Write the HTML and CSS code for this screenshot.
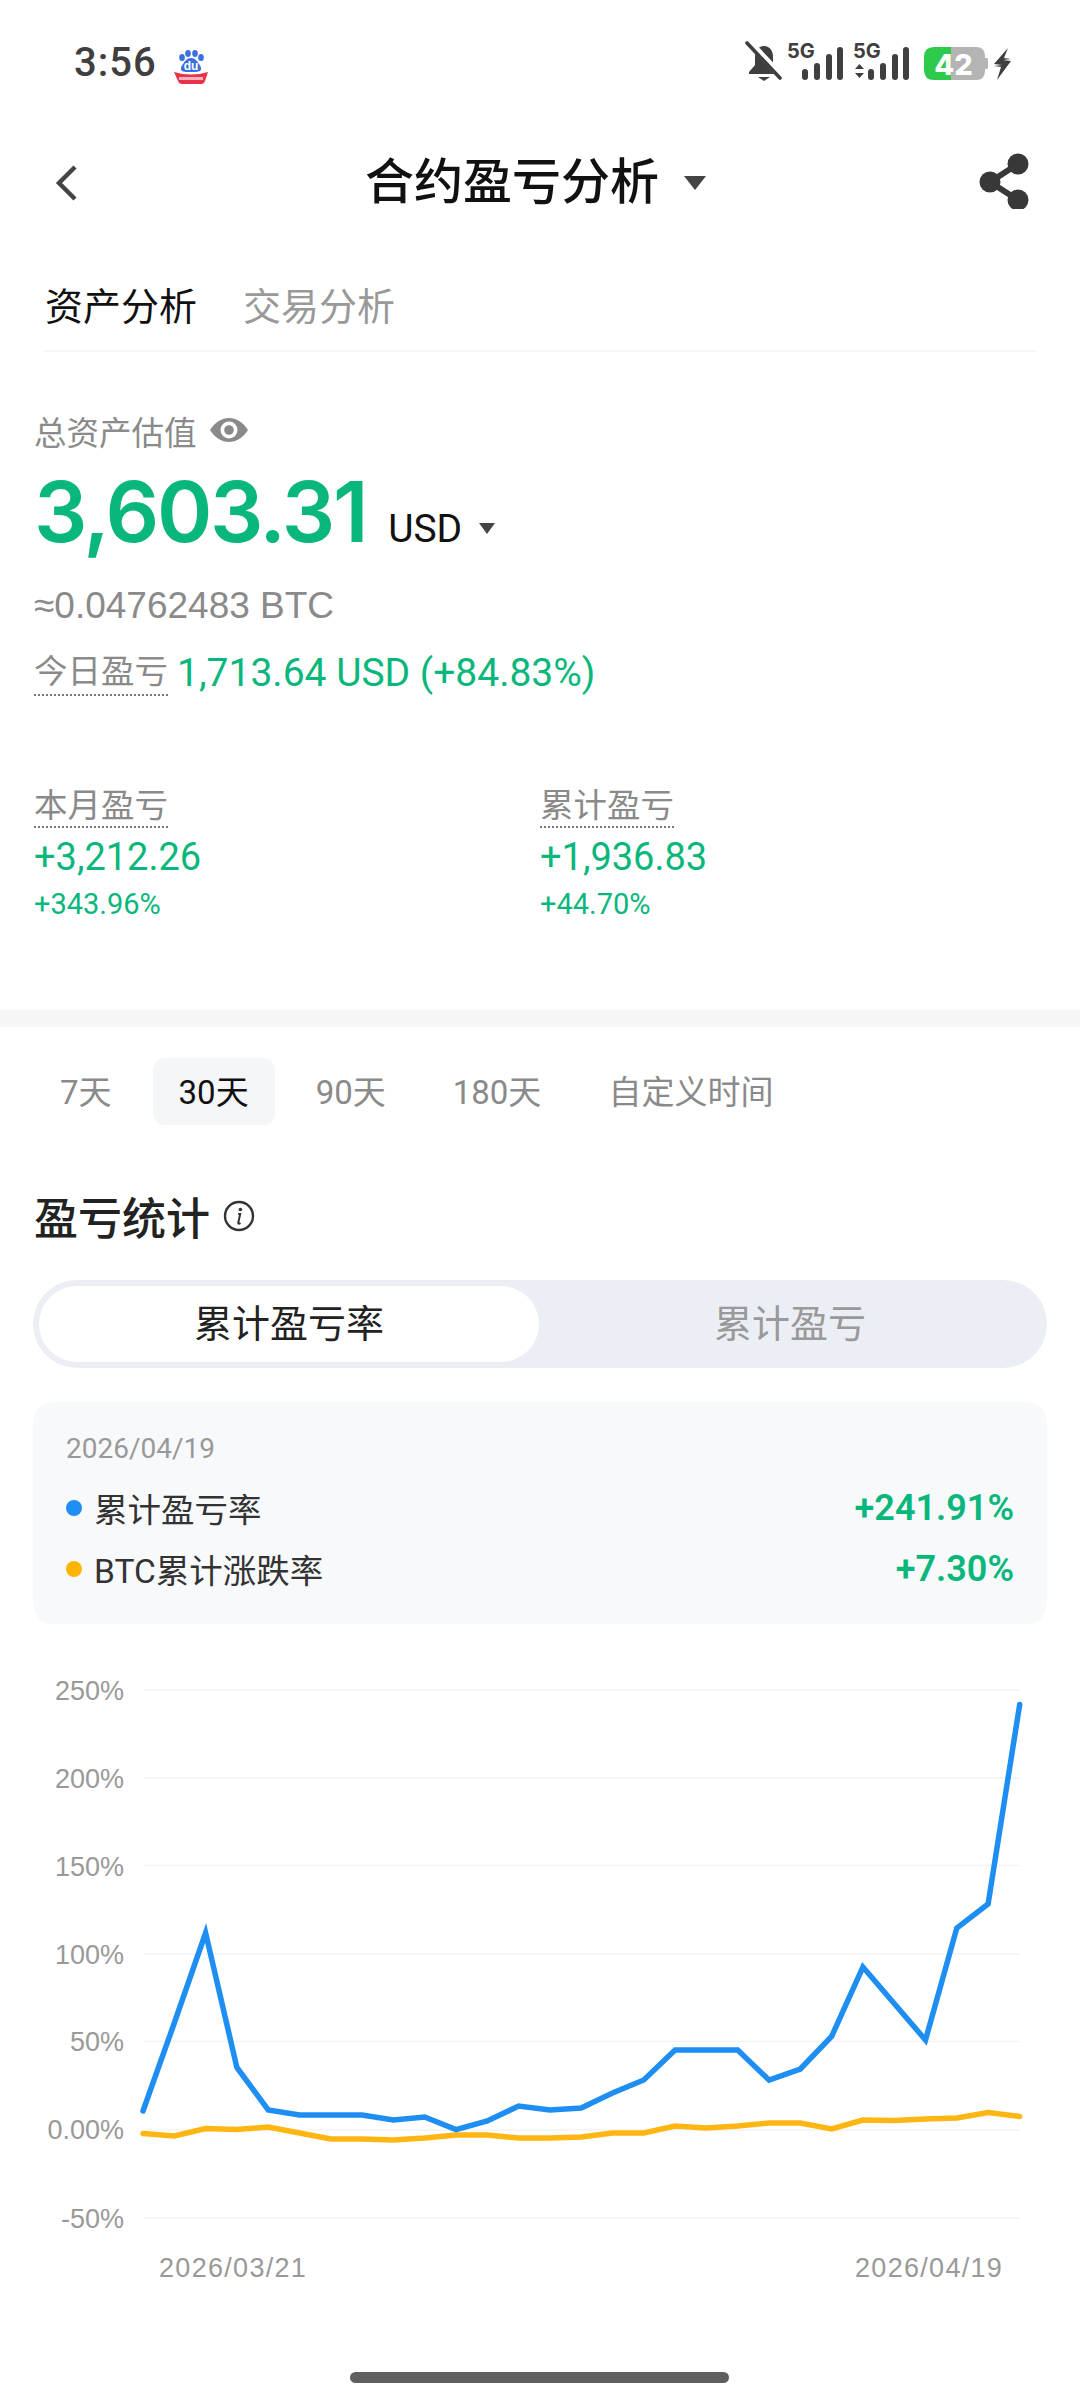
FILE: index.html
```html
<!DOCTYPE html>
<html lang="zh">
<head>
<meta charset="utf-8">
<title>合约盈亏分析</title>
<link rel="stylesheet" href="styles.css">
</head>
<body>
<div class="page">
  <div class="statusbar">
    <div class="status-left">
      <span class="time">3:56</span>
      <svg class="baidu" viewBox="0 0 36 34" width="36" height="34">
        <ellipse cx="9" cy="7.5" rx="2.8" ry="3.6" fill="#3b6fe0"/>
        <ellipse cx="15" cy="3.5" rx="2.8" ry="3.4" fill="#3b6fe0"/>
        <ellipse cx="22" cy="3.5" rx="2.8" ry="3.4" fill="#3b6fe0"/>
        <ellipse cx="28" cy="7.5" rx="2.8" ry="3.6" fill="#3b6fe0"/>
        <path d="M18 8c4 0 6 3 8 6 2 3 3 5 1 7-2 1-5 1-9 1s-7 0-9-1c-2-2-1-4 1-7 2-3 4-6 8-6z" fill="#3b6fe0"/>
        <text x="18" y="20" class="baidu-du">du</text>
        <path d="M1 22q17 5 34 0l-3 9q-1 3-4 3H9q-3 0-4-3z" fill="#e8344a"/>
        <rect x="6" y="27" width="24" height="3" fill="#ffb3bd"/>
      </svg>
    </div>
    <svg class="status-right" viewBox="0 -8 270 48" width="270" height="48">
      <g fill="#3f3f3f">
        <path d="M19 5c6 0 9 5 9 11v8l6 7v2H4v-2l6-7v-8c0-6 3-11 9-11z"/>
        <path d="M13 36h12l-6 4z"/>
      </g>
      <path d="M4 1 36 35" stroke="#fff" stroke-width="7"/>
      <path d="M2 2 35 37" stroke="#3f3f3f" stroke-width="3.6" stroke-linecap="round"/>
      <text x="42" y="17" class="five-g">5G</text>
      <g fill="#3f3f3f">
        <rect x="57" y="28" width="6" height="11" rx="3"/>
        <rect x="69" y="22" width="6" height="17" rx="3"/>
        <rect x="81" y="13" width="6" height="26" rx="3"/>
        <rect x="92" y="6" width="6" height="33" rx="3"/>
      </g>
      <text x="108" y="17" class="five-g">5G</text>
      <g fill="#3f3f3f">
        <path d="M110 28l4.500-5 4.500 5zM110 32h9l-4.500 5z"/>
        <rect x="123" y="28" width="6" height="11" rx="3"/>
        <rect x="135" y="22" width="6" height="17" rx="3"/>
        <rect x="147" y="13" width="6" height="26" rx="3"/>
        <rect x="158" y="6" width="6" height="33" rx="3"/>
      </g>
      <path d="M206 6h25q9 0 9 9v15q0 9-9 9h-25z" fill="#b4b4b4"/>
      <path d="M206 6h-17q-10 0-10 10v13q0 10 10 10h17z" fill="#2ecb4b"/>
      <path d="M240 17h2q1 0 1 2v7q0 2-1 2h-2z" fill="#b4b4b4"/>
      <text x="208.500" y="33.500" class="battery">42</text>
      <path d="M263 7 249 23l8 1-8 1 7 1-4 13 14-19-8-1 8-1-7-1z" fill="#3f3f3f"/>
    </svg>
  </div>

  <div class="header">
    <svg class="back" viewBox="0 0 24 36" width="24" height="36">
      <path d="M20 2 4 18l16 16" fill="none" stroke="#444" stroke-width="4.400"/>
    </svg>
    <div class="title-wrap">
      <span class="title">合约盈亏分析</span>
      <span class="caret caret-lg"></span>
    </div>
    <svg class="share" viewBox="0 0 56 56" width="56" height="56">
      <g fill="#383838">
        <circle cx="42" cy="11" r="10.500"/>
        <circle cx="14" cy="29" r="10.500"/>
        <circle cx="42" cy="47" r="10.500"/>
      </g>
      <path d="M42 11 14 29l28 18" fill="none" stroke="#383838" stroke-width="6"/>
    </svg>
  </div>

  <div class="maintabs">
    <span class="maintab active">资产分析</span>
    <span class="maintab">交易分析</span>
  </div>

  <section class="summary">
    <div class="total-label">
      <span>总资产估值</span>
      <svg viewBox="0 0 38 26" width="38" height="26">
        <path d="M0 13C5 5 12 1 19 1s14 4 19 12c-5 8-12 12-19 12S5 21 0 13z" fill="#8a8a8a"/>
        <circle cx="19" cy="13" r="8.500" fill="#fff"/>
        <circle cx="19" cy="13" r="4.800" fill="#8a8a8a"/>
      </svg>
    </div>
    <div class="amount-row">
      <span class="amount">3,603.31</span>
      <span class="currency">USD</span>
      <span class="caret caret-sm"></span>
    </div>
    <div class="btc">≈0.04762483 BTC</div>
    <div class="today">
      <span class="dotted">今日盈亏</span>
      <span class="today-val">1,713.64 USD (+84.83%)</span>
    </div>
    <div class="stats">
      <div class="stat">
        <span class="dotted stat-label">本月盈亏</span>
        <div class="stat-val">+3,212.26</div>
        <div class="stat-pct">+343.96%</div>
      </div>
      <div class="stat">
        <span class="dotted stat-label">累计盈亏</span>
        <div class="stat-val">+1,936.83</div>
        <div class="stat-pct">+44.70%</div>
      </div>
    </div>
  </section>

  <div class="band"></div>

  <div class="ranges">
    <span class="range">7天</span>
    <span class="range active">30天</span>
    <span class="range">90天</span>
    <span class="range">180天</span>
    <span class="range">自定义时间</span>
  </div>

  <div class="heading">
    <span>盈亏统计</span>
    <svg viewBox="0 0 32 32" width="32" height="32">
      <circle cx="16" cy="16" r="14" fill="none" stroke="#333" stroke-width="2.400"/>
      <circle cx="17.400" cy="9.500" r="1.800" fill="#333"/>
      <path d="M15.200 14h2l-2 9c0 1 1 1 2.200 0" fill="none" stroke="#333" stroke-width="2"/>
    </svg>
  </div>

  <div class="segment">
    <span class="seg active">累计盈亏率</span>
    <span class="seg">累计盈亏</span>
  </div>

  <div class="card">
    <div class="card-date">2026/04/19</div>
    <div class="card-row">
      <span class="dot dot-blue"></span>
      <span class="card-name">累计盈亏率</span>
      <span class="card-val">+241.91%</span>
    </div>
    <div class="card-row">
      <span class="dot dot-yellow"></span>
      <span class="card-name">BTC累计涨跌率</span>
      <span class="card-val">+7.30%</span>
    </div>
  </div>

  <svg class="chart" viewBox="0 1624 1080 740" width="1080" height="740">
    <g class="grid">
      <line x1="144" x2="1020" y1="1690" y2="1690"/>
      <line x1="144" x2="1020" y1="1778" y2="1778"/>
      <line x1="144" x2="1020" y1="1865.500" y2="1865.500"/>
      <line x1="144" x2="1020" y1="1954" y2="1954"/>
      <line x1="144" x2="1020" y1="2041.500" y2="2041.500"/>
      <line x1="144" x2="1020" y1="2130" y2="2130"/>
      <line x1="144" x2="1020" y1="2218" y2="2218"/>
    </g>
    <g class="ylabels">
      <text x="124" y="1700">250%</text>
      <text x="124" y="1788">200%</text>
      <text x="124" y="1876">150%</text>
      <text x="124" y="1964">100%</text>
      <text x="124" y="2051">50%</text>
      <text x="124" y="2139">0.00%</text>
      <text x="124" y="2228">-50%</text>
    </g>
    <text class="xlabel" x="159" y="2277">2026/03/21</text>
    <text class="xlabel" x="855" y="2277">2026/04/19</text>
    <polyline class="line-yellow" points="143,2133.5 174.3,2136 205.6,2128.6 236.9,2129.6 268.2,2127 299.5,2133 330.8,2139 362.1,2139 393.4,2140 424.7,2138 456,2135 487.3,2135 518.6,2138 549.9,2138 581.2,2137 612.5,2133 643.8,2133 675.1,2126 706.4,2128 737.7,2126 769,2123 800.3,2123 831.6,2129 862.9,2120 894.2,2120.5 925.5,2119 956.8,2118 988.1,2112.6 1019.7,2116.5"/>
    <polyline class="line-blue" points="143,2111 174.3,2023 205.6,1933 236.9,2067.5 268.2,2110 299.5,2115 330.8,2115 362.1,2115 393.4,2120 424.7,2117 456,2129.6 487.3,2121 518.6,2106 549.9,2110 581.2,2108 612.5,2093 643.8,2080 675.1,2050 706.4,2050 737.7,2050 769,2080 800.3,2069 831.6,2036.5 862.9,1967 894.2,2003.5 925.5,2040 956.8,1928 988.1,1904 1019.7,1704.5"/>
  </svg>

  <div class="homebar"></div>
</div>
</body>
</html>
```

FILE: styles.css
```css
* { box-sizing: border-box; }
html, body { margin: 0; padding: 0; background: #fff; }
body { font-family: "Roboto", "Noto Sans CJK SC", sans-serif; color: #111; }
.page { width: 1080px; height: 2400px; overflow: hidden; background: #fff; }

.statusbar { height: 124px; padding: 33px 65px 0 74px; display: flex; justify-content: space-between; align-items: flex-start; }
.status-left { display: flex; align-items: center; gap: 16px; margin-top: 8px; }
.time { font-family: "Roboto", sans-serif; font-weight: 500; font-size: 40px; line-height: 44px; color: #3f3f3f; letter-spacing: 1px; }
.baidu { margin-top: 8px; }
.baidu-du { font-family: "Liberation Sans", sans-serif; font-size: 12px; font-weight: 700; fill: #fff; text-anchor: middle; }
.five-g { font-family: "Inter", sans-serif; font-size: 20px; font-weight: 700; fill: #3f3f3f; }
.battery { font-family: "Inter", sans-serif; font-size: 29px; font-weight: 800; fill: #fff; text-anchor: middle; }

.header { height: 114px; padding: 3px 48px 0 55px; display: flex; align-items: center; justify-content: space-between; }
.title-wrap { display: flex; align-items: center; gap: 25px; margin-left: 16px; }
.title { font-size: 49px; font-weight: 500; line-height: 60px; color: #111; }
.back { display: block; }
.share { display: block; margin-top: -3px; }

.caret { display: block; width: 0; height: 0; border-left-style: solid; border-right-style: solid; border-top-style: solid; border-left-color: transparent; border-right-color: transparent; border-top-color: #444; }
.caret-lg { border-left-width: 11px; border-right-width: 11px; border-top-width: 14px; }
.caret-sm { border-left-width: 8px; border-right-width: 8px; border-top-width: 11px; margin-top: 32px; }

.maintabs { height: 114px; margin: 0 44px; padding: 38px 0 0 1px; display: flex; gap: 46px; border-bottom: 2px solid #f5f5f5; }
.maintab { font-size: 38px; line-height: 62px; color: #999; }
.maintab.active { color: #111; }

.summary { padding: 56px 34px 86px; }
.total-label { height: 44px; display: flex; align-items: center; gap: 13px; font-size: 32.5px; color: #8a8a8a; }
.amount-row { height: 120px; display: flex; align-items: center; }
.amount { font-family: "Inter", sans-serif; font-size: 84px; font-weight: 600; color: #09b77c; letter-spacing: -2.300px; line-height: 120px; }
.currency { font-family: "Roboto", sans-serif; font-size: 39px; color: #111; margin: 34px 17px 0 22px; }
.btc { height: 66px; line-height: 68px; font-family: "Liberation Sans", sans-serif; font-size: 37px; color: #8a8a8a; }
.today { height: 68px; padding-top: 12px; display: flex; align-items: flex-start; gap: 9px; }
.dotted { display: inline-block; height: 46px; line-height: 44px; font-size: 33.5px; color: #8a8a8a; border-bottom: 2px dotted #777; }
.dotted.stat-label { line-height: 47px; }
.today-val { font-size: 39px; line-height: 46px; font-weight: 400; color: #09b77c; }
.stats { display: flex; margin-top: 76px; }
.stat { width: 507px; }
.stat-val { height: 50px; line-height: 48px; margin-top: 5px; font-size: 38px; font-weight: 400; color: #09b77c; }
.stat-pct { height: 40px; line-height: 40px; margin-top: 1px; font-size: 29px; color: #09b77c; }

.band { height: 17px; background: #f6f6f6; }

.ranges { height: 67px; margin: 31px 0 0 34px; display: flex; gap: 15px; }
.range { height: 67px; line-height: 69px; padding: 0 26px; font-size: 33px; color: #8a8a8a; border-radius: 12px; }
.range.active { background: #f5f6f7; color: #111; }

.heading { height: 60px; margin: 61px 34px 0; display: flex; align-items: center; gap: 13px; font-size: 44px; font-weight: 500; color: #222; }

.segment { height: 88px; margin: 34px 33px 0; padding: 6px; display: flex; background: #eceef5; border-radius: 44px; }
.seg { width: 500px; height: 76px; line-height: 76px; text-align: center; font-size: 38px; color: #999; border-radius: 38px; }
.seg.active { background: #fff; color: #222; }
.seg:last-child { flex: 1; }

.card { height: 222px; margin: 34px 33px 0; padding: 26px 33px 0; background: #f8f9fb; border-radius: 20px; }
.card-date { height: 42px; line-height: 42px; margin-bottom: 7px; font-size: 28px; color: #999; }
.card-row { height: 61px; display: flex; align-items: center; }
.dot { width: 16px; height: 16px; border-radius: 50%; margin-right: 12px; }
.dot-blue { background: #1e90f5; }
.dot-yellow { background: #ffb400; }
.card-name { flex: 1; font-size: 33.500px; color: #333; }
.card-val { font-size: 36px; font-weight: 600; color: #09b77c; }

.chart { display: block; }
.grid line { stroke: #f3f3f3; stroke-width: 1.5; }
.ylabels text { font-family: "Liberation Sans", sans-serif; font-size: 27px; fill: #999; text-anchor: end; }
.xlabel { font-family: "Liberation Sans", sans-serif; font-size: 27px; letter-spacing: 1.300px; fill: #999; }
.line-blue, .line-yellow { fill: none; stroke-width: 5.5; stroke-linejoin: miter; stroke-linecap: round; }
.line-blue { stroke: #1e8ef2; }
.line-yellow { stroke: #ffb612; }

.homebar { width: 379px; height: 11px; margin: 8px 0 0 350px; border-radius: 6px; background: #5f5f5f; }
```
